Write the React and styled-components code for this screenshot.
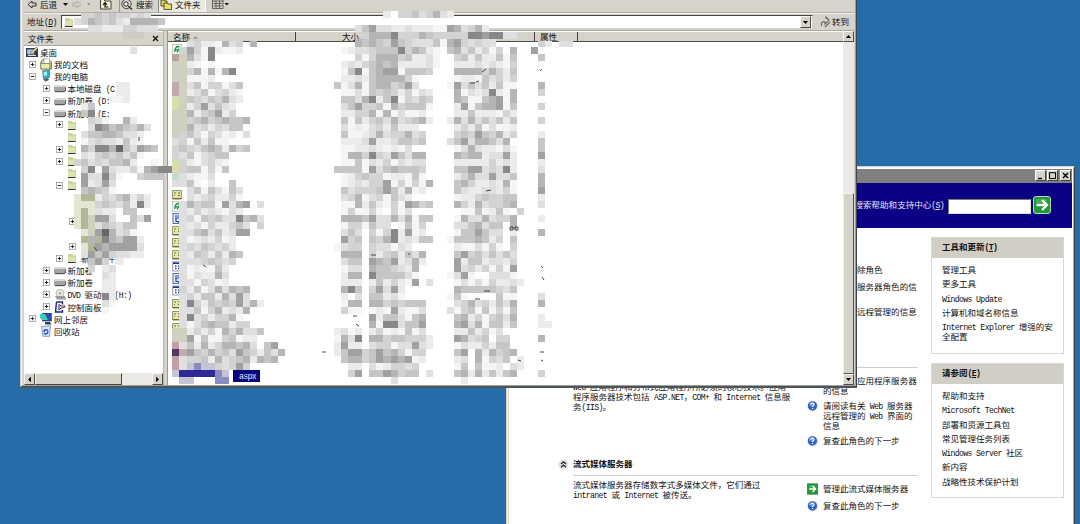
import React from 'react';
import styled, { createGlobalStyle } from 'styled-components';

const Global = createGlobalStyle`
  html, body { margin: 0; padding: 0; }
  body { overflow: hidden; }
  *, *::before, *::after { box-sizing: border-box; }
`;

const Desktop = styled.div`
  position: relative;
  width: 1080px;
  height: 524px;
  overflow: hidden;
  background: #266ca9;
  color: #111;
  font: 8.52px/10.2px 'Noto Sans CJK SC', 'Liberation Sans', sans-serif;
  white-space: nowrap;
`;

const Latin = styled.span`
  font-family: 'Liberation Mono', monospace;
  font-size: 8.2px;
  letter-spacing: -0.65px;
  line-height: 1px;
  white-space: pre;
`;

/* Half-width characters take exactly half of a full-width one. */
const T = ({ children }) =>
  children.split(/([\x20-\x7e]+)/).map((s, i) => (i % 2 ? <Latin key={i}>{s}</Latin> : s));

const face = '#d6d3cb';

/* ---------- server window ---------- */

const ServerWindow = styled.section`
  position: absolute;
  left: 506px;
  top: 166px;
  width: 569px;
  height: 380px;
  display: flex;
  flex-direction: column;
  background: #fff;
  border: 1px solid #d4d0c8;
  border-right-color: #404040;
  box-shadow: inset 1px 1px #f6f6f6, inset -1px 0 #a8a8a8, inset 2px 0 #d4d0c8;
  padding: 2px 2px 0 3px;
`;
const TitleBar = styled.div`
  display: flex;
  flex: none;
  justify-content: flex-end;
  gap: 1px;
  height: 14px;
  padding: 1px 1px 1px 0;
  background: #808080;
`;
const CaptionButton = styled.span`
  display: grid;
  place-items: center;
  width: 11px;
  height: 11px;
  margin-left: ${(p) => (p.$apart ? 1 : 0)}px;
  background: ${face};
  border: 1px solid #fff;
  border-right-color: #444;
  border-bottom-color: #444;
`;
const Banner = styled.div`
  display: flex;
  flex: none;
  align-items: center;
  justify-content: flex-end;
  height: 45px;
  padding: 0 21px 2px 0;
  background: #0a0284;
  color: #e6e6f4;
`;
const SearchLabel = styled.span`
  padding-bottom: 1px;
`;
const SearchInput = styled.div`
  width: 83px;
  height: 15px;
  margin: 3px 2px 0 4px;
  background: #fff;
  border: 1px solid #777;
  border-right-color: #ddd;
  border-bottom-color: #ddd;
`;
const Content = styled.div`
  display: flex;
  flex: 1;
  align-items: flex-start;
  padding-right: 8px;
`;
const Roles = styled.div`
  flex: 1;
  padding: 0 13px 0 48px;
`;
const RoleHead = styled.div`
  display: flex;
  align-items: flex-start;
  height: ${(p) => p.$h}px;
  gap: 4px;
  font-weight: 700;
  padding-top: ${(p) => p.$top || 0}px;
`;
const RoleBody = styled.div`
  display: flex;
  justify-content: space-between;
  height: ${(p) => p.$h}px;
  margin-left: 15px;
  border-top: ${(p) => (p.$plain ? 0 : 1)}px solid #cfcfcf;
`;
const Paragraph = styled.div`
  padding-top: ${(p) => p.$top}px;
`;
const Links = styled.div`
  display: flex;
  flex-direction: column;
  gap: ${(p) => p.$gap}px;
  width: 111px;
  padding-top: ${(p) => p.$top}px;
`;
const LinkRow = styled.div`
  display: flex;
  gap: 5px;
`;
const Sidebar = styled.div`
  display: flex;
  flex-direction: column;
  gap: 9px;
  width: 133px;
  padding-top: 9px;
`;
const Card = styled.div`
  height: ${(p) => p.$h}px;
  border: 1px solid #d9d7d0;
  background: #fff;
`;
const CardTitle = styled.div`
  height: 20px;
  padding: 3px 0 0 10px;
  background: #d1cec5;
  font-weight: 700;
`;
const CardList = styled.div`
  display: flex;
  flex-direction: column;
  gap: 4.1px;
  padding: 6px 0 0 10px;
`;
const Help = () => (
  <svg width="11" height="12" viewBox="0 0 11 12">
    <circle cx="5.7" cy="6.2" r="5" fill="#b9c4d4" />
    <circle cx="5.4" cy="5.8" r="4.6" fill="#2e62c4" />
    <circle cx="4.3" cy="4.3" r="2.4" fill="#7fa6ea" opacity=".6" />
    <path d="M3.8 4.7C4 2.6 7.2 2.7 7 4.7C6.9 5.8 5.5 5.9 5.5 7M5.5 8V9" fill="none" stroke="#fff" strokeWidth="1.2" />
  </svg>
);
const Go = ({ size = 11 }) => (
  <svg width={size} height={size > 12 ? size : 12} viewBox="0 0 18 18">
    <rect x=".5" y=".5" width="17" height="17" rx={size > 12 ? 2.5 : 0} fill="#22983a" stroke={size > 12 ? '#b7ddb5' : '#1b7f2e'} />
    <path d="M3 3H14V7H3Z" fill="#5fbd64" opacity=".6" />
    <path d="M3.5 9H14M9 4L14 9L9 14" fill="none" stroke="#fff" strokeWidth="2.3" />
  </svg>
);
const Chevron = () => (
  <svg width="11" height="12" viewBox="0 0 11 12">
    <circle cx="5.5" cy="6.5" r="5" fill="#dedee4" />
    <path d="M3 6L5.5 3.7L8 6M3 9.3L5.5 7L8 9.3" fill="none" stroke="#222" strokeWidth="1.2" />
  </svg>
);

const updates = ['管理工具', '更多工具', 'Windows Update', '计算机和域名称信息', 'Internet Explorer 增强的安\n全配置'];
const seeAlso = ['帮助和支持', 'Microsoft TechNet', '部署和资源工具包', '常见管理任务列表', 'Windows Server 社区', '新内容', '战略性技术保护计划'];

const Lines = ({ text }) => (
  <div>
    {text.split('\n').map((l, i) => (
      <div key={i}><T>{l}</T></div>
    ))}
  </div>
);
const Item = ({ go, text }) => (
  <LinkRow>
    {go ? <Go /> : <Help />}
    <Lines text={text} />
  </LinkRow>
);
const LinkItem = styled.div`
  display: flex;
`;
const SideCard = ({ h, title, hotkey, items }) => (
  <Card $h={h}>
    <CardTitle>{title}<Latin>(<u>{hotkey}</u>)</Latin></CardTitle>
    <CardList>
      {items.map((t) => <LinkItem key={t}><Lines text={t} /></LinkItem>)}
    </CardList>
  </Card>
);

const Server = () => (
  <ServerWindow>
    <TitleBar>
      <CaptionButton><svg width="9" height="9"><path d="M2 7.5H6" stroke="#000" strokeWidth="1.4" /></svg></CaptionButton>
      <CaptionButton><svg width="9" height="9"><path d="M1.5 2V7.5H7.5V2M1 1.7H8" fill="none" stroke="#000" /></svg></CaptionButton>
      <CaptionButton $apart><svg width="9" height="9"><path d="M2 2L7 7M7 2L2 7" stroke="#000" strokeWidth="1.3" /></svg></CaptionButton>
    </TitleBar>
    <Banner>
      <SearchLabel>搜索帮助和支持中心<Latin>(<u>S</u>)</Latin></SearchLabel>
      <SearchInput />
      <Go size={18} />
    </Banner>
    <Content>
      <Roles>
        <RoleBody $h={125} $plain>
          <span />
          <Links $top={35.5} $gap={5}>
            <Item go text="添加或删除角色" />
            <Item text={'阅读有关服务器角色的信\n息'} />
            <Item text="阅读有关远程管理的信息" />
          </Links>
        </RoleBody>
        <RoleHead $h={14} />
        <RoleBody $h={86}>
          <Paragraph $top={13}>
            <Lines text={'Web 应用程序和分布式应用程序所必须的核心技术。应用\n程序服务器技术包括 ASP.NET，COM+ 和 Internet 信息服\n务(IIS)。'} />
          </Paragraph>
          <Links $top={7} $gap={4.3}>
            <Item text={'阅读有关应用程序服务器\n的信息'} />
            <Item text={'请阅读有关 Web 服务器\n远程管理的 Web 界面的\n信息'} />
            <Item text="复查此角色的下一步" />
          </Links>
        </RoleBody>
        <RoleHead $h={22} $top={5}><Chevron />流式媒体服务器</RoleHead>
        <RoleBody $h={70}>
          <Paragraph $top={2.5}>
            <Lines text={'流式媒体服务器存储数字式多媒体文件，它们通过\nintranet 或 Internet 被传送。'} />
          </Paragraph>
          <Links $top={7} $gap={5}>
            <Item go text="管理此流式媒体服务器" />
            <Item text="复查此角色的下一步" />
          </Links>
        </RoleBody>
      </Roles>
      <Sidebar>
        <SideCard h={117} title="工具和更新" hotkey="T" items={updates} />
        <SideCard h={135} title="请参阅" hotkey="E" items={seeAlso} />
      </Sidebar>
    </Content>
  </ServerWindow>
);

/* ---------- explorer window ---------- */

const Explorer = styled.section`
  position: absolute;
  left: 20px;
  top: 0;
  width: 837px;
  height: 388px;
  display: flex;
  flex-direction: column;
  background: ${face};
  border: 1px solid #c9ccce;
  border-top: 0;
  border-right-color: #3c4650;
  border-bottom: 2px solid #4c5558;
  box-shadow: inset 1px 0 #f4f4f2, inset -1px -1px #a09e98;
  padding: 0 2px 1px 3px;
`;
const Toolbar = styled.div`
  display: flex;
  flex: none;
  align-items: flex-start;
  height: 13px;
  border-bottom: 1px solid #b4b1a9;
  box-shadow: 0 1px #f2f1ee;
`;
const ToolItem = styled.div`
  display: flex;
  align-items: flex-start;
  gap: 3px;
  height: 12px;
  width: ${(p) => p.$w}px;
  padding-left: ${(p) => p.$pad || 0}px;
  line-height: 9px;
  ${(p) => p.$pressed && 'background:#ebe9e4;border-left:1px solid #888;border-right:1px solid #fff;'}
  ${(p) => p.$rule && 'border-left:1px solid #9a978f;'}
`;
const AddressBar = styled.div`
  display: flex;
  flex: none;
  align-items: center;
  height: 17px;
  padding-left: 3px;
`;
const AddressLabel = styled.span`
  width: 30px;
  padding-bottom: 1px;
`;
const AddressField = styled.div`
  display: flex;
  align-items: center;
  justify-content: space-between;
  width: 752px;
  height: 14px;
  margin: 1px 7px 0 4px;
  padding: 0 1px 0 2px;
  background: #fff;
  border: 1px solid #d4d0c8;
  border-top: 1.5px solid #444;
  border-left: 1.5px solid #444;
`;
const Arrow = styled.span`
  display: grid;
  flex: none;
  place-items: center;
  width: ${(p) => p.$w || 11}px;
  height: ${(p) => p.$h || 11}px;
  background: ${face};
  border: 1px solid #f8f8f6;
  border-right-color: #4c4c4c;
  border-bottom-color: #4c4c4c;
`;
const Panes = styled.div`
  display: flex;
  flex: 1;
  min-height: 0;
  border-top: 1px solid #aaa79f;
`;
const TreePane = styled.div`
  display: flex;
  flex-direction: column;
  width: 140px;
  background: #fff;
  border-right: 1px solid #b8b5ae;
`;
const PaneTitle = styled.div`
  display: flex;
  flex: none;
  align-items: center;
  justify-content: space-between;
  height: 15px;
  padding: 0 4px;
  background: ${face};
  border-top: 1px solid #fff;
  border-bottom: 1px solid #aaa79f;
`;
const Tree = styled.div`
  flex: 1;
  overflow: hidden;
`;
const TreeRow = styled.div`
  display: flex;
  align-items: center;
  height: 12.13px;
  padding-left: ${(p) => p.$indent}px;
  gap: 2px;
`;
const Expander = styled.span`
  display: flex;
  width: 7px;
  margin-right: 2px;
`;
const HScroll = styled.div`
  display: flex;
  flex: none;
  height: 12px;
  background: #ebe9e5;
  justify-content: space-between;
`;
const HThumb = styled.div`
  width: 87px;
  margin-right: auto;
  background: ${face};
  border: 1px solid #f6f6f4;
  border-right-color: #444;
  border-bottom-color: #444;
`;
const Splitter = styled.div`
  width: 4px;
  background: ${face};
  border-right: 1px solid #9b988f;
`;
const ListPane = styled.div`
  display: flex;
  flex: 1;
  flex-direction: column;
  min-width: 0;
  background: #fff;
`;
const Columns = styled.div`
  display: flex;
  flex: none;
  height: 11px;
  background: ${face};
  border-top: 1px solid #fff;
  border-bottom: 1.5px solid #4e4c48;
  line-height: 9px;
`;
const Column = styled.div`
  flex: none;
  width: ${(p) => p.$w}px;
  padding-left: ${(p) => p.$pad || 5}px;
  border-right: 1px solid #44423e;
`;
const Files = styled.div`
  padding-top: 1px;
`;
const FileRow = styled.div`
  display: flex;
  align-items: center;
  height: 12.1px;
  padding-left: 4px;
`;
const Selected = styled.span`
  width: 27px;
  height: 12px;
  margin-left: 61px;
  padding: 1px 0 0 6px;
  background: #08057c;
  color: #e8e8ff;
  line-height: 9px;
`;
const VScroll = styled.div`
  display: flex;
  flex-direction: column;
  justify-content: space-between;
  width: 11px;
  background: #ebe9e6;
`;
const VThumb = styled.div`
  height: 181px;
  margin-top: auto;
  background: ${face};
  border: 1px solid #f4f3f0;
  border-right-color: #55534e;
  border-bottom-color: #55534e;
`;

const Tri = ({ d }) => (
  <svg width="7" height="7" viewBox="0 0 7 7">
    <path d={{ up: 'M1 5H6L3.5 2Z', down: 'M1 2H6L3.5 5Z', left: 'M5 .8V6.2L2 3.5Z', right: 'M2 .8V6.2L5 3.5Z' }[d]} fill="#000" />
  </svg>
);
const PlusMinus = ({ kind }) => (
  <svg width="7" height="7" viewBox="0 0 7 7">
    <rect x=".5" y=".5" width="6" height="6" fill="#fff" stroke="#999" strokeWidth=".8" />
    <path d={kind === '+' ? 'M1.8 3.5H5.2M3.5 1.8V5.2' : 'M1.8 3.5H5.2'} stroke="#111" strokeWidth=".9" />
  </svg>
);

const glyphs = {
  desktop: <><rect x="0" y="2" width="12" height="9" fill="#303a4e" /><rect x="1.2" y="3.4" width="7" height="5" fill="#a9c6ee" /><path d="M4 7L10.5 1L12 2.5L6 8Z" fill="#eadf9a" stroke="#333" strokeWidth=".5" /><path d="M2 9.5H10" stroke="#ddd" /></>,
  docs: <><path d="M1 4L3 1.5H9L11.3 4V11H1Z" fill="#e0dc8e" stroke="#55583a" strokeWidth=".9" /><rect x="4" y=".8" width="5.5" height="5" fill="#fff" stroke="#777" strokeWidth=".5" /><path d="M.6 5.5H10L9.5 11H1.2Z" fill="#eceaa8" stroke="#66683a" strokeWidth=".6" /></>,
  pc: <><path d="M2.5 1L9.5 0V7.5L3.5 8.5Z" fill="#25b8cf" stroke="#566" strokeWidth=".7" /><path d="M3.5 2L7 1.5V5.5L4 6Z" fill="#9cf0f4" /><path d="M3 9L8 8L9 10L5.5 11.7Z" fill="#52606e" /></>,
  disk: <><path d="M0 5L2 3H10.5L12 5V8.5L10.5 10H1.5L0 8.5Z" fill="#a5a5a5" /><path d="M0 5L2 3H10.5L11.5 5Z" fill="#dadada" /><path d="M.8 9.7H10.5L11.8 8V5.5" fill="none" stroke="#3c3c3c" strokeWidth=".9" /></>,
  folder: <><path d="M1 2H5L6 3.3H9V10.5H1Z" fill="#cfd39a" /><path d="M1 5H8V10H1Z" fill="#dfe2b4" /><path d="M1 10.5H8.5" stroke="#33352a" strokeWidth="1" /></>,
  dvd: <><circle cx="6" cy="4.3" r="4" fill="#e5e5e8" stroke="#999" strokeWidth=".6" /><circle cx="6" cy="4.3" r="1.2" fill="#b5b560" /><path d="M1 7H11L12 10.5H3Z" fill="#9a9a9a" /></>,
  control: <><path d="M2.5 1H8.5V3.5M8.5 9V11H1.5L2.5 1" fill="#dfe6f7" stroke="#252a70" strokeWidth="1.4" /><path d="M5 3.5V9L7 7L10.5 6.5L11 5L7 5Z" fill="#f3f3ff" stroke="#252a70" strokeWidth="1" /><circle cx="8" cy="6" r="1.2" fill="#d83" /></>,
  network: <><rect x="2.5" y="0" width="9" height="8" fill="#2a4bbd" stroke="#26324a" strokeWidth=".6" /><path d="M0 1H5L8 7H2L0 5Z" fill="#3fd0b2" /><path d="M5 9H10L11.5 11.5H5Z" fill="#345" /></>,
  bin: <><path d="M1.5 1.5L10.5 .8L9.5 11.3H3Z" fill="#dce7fa" stroke="#6f86bb" strokeWidth=".8" /><path d="M4 7C4 4 7.5 4 8 6.5M8 7C7 9.5 5 9.5 4 8" fill="none" stroke="#2458c8" strokeWidth="1.5" /></>,
};
const Icon = ({ name }) => <svg width="12" height="12" viewBox="0 0 12 12">{glyphs[name]}</svg>;

/* [indent, expander, icon, label] */
const tree = [
  [0, null, 'desktop', '桌面'],
  [5, '+', 'docs', '我的文档'],
  [5, '-', 'pc', '我的电脑'],
  [18.5, '+', 'disk', '本地磁盘 (C'],
  [18.5, '+', 'disk', '新加卷 (D:'],
  [18.5, '-', 'disk', '新加卷 (E:'],
  [32, '+', 'folder', ''],
  [32, ' ', 'folder', ''],
  [32, '+', 'folder', ''],
  [32, '+', 'folder', ''],
  [32, ' ', 'folder', ''],
  [32, '-', 'folder', ''],
  [0, ' ', null, ''],
  [0, ' ', null, ''],
  [45, '+', null, ''],
  [0, ' ', null, ''],
  [45, '+', null, ''],
  [32, '+', 'folder', '新建文件夹'],
  [18.5, '+', 'disk', '新加卷'],
  [18.5, '+', 'disk', '新加卷'],
  [18.5, '+', 'dvd', 'DVD 驱动器 (H:)'],
  [18.5, '+', 'control', '控制面板'],
  [5, '+', 'network', '网上邻居'],
  [5, ' ', 'bin', '回收站'],
];

const FileIcon = ({ kind }) => (
  <svg width="11" height="11" viewBox="0 0 11 11">
    {kind === 'y' && <><path d="M.5 1.5H9.5V10H.5Z" fill="#e4e5a6" stroke="#8b8d5b" strokeWidth=".9" /><path d="M2.2 4H4M6 4H8M2.2 6.5H3M6 6.5H8M1 9.6H9" stroke="#65663a" strokeWidth="1" /></>}
    {kind === 'g' && <><rect x=".5" y=".5" width="9" height="10" fill="#f4fbf4" stroke="#a5b5a5" strokeWidth=".7" /><path d="M7.5 3C5 1.5 2.5 4 2.8 8M3 5.8H7M5 8.5L7.5 4" fill="none" stroke="#178c3c" strokeWidth="1.3" /></>}
    {kind === 'b' && <><rect x="1" y=".5" width="8.5" height="10" fill="#e3ebf8" stroke="#4e5b82" strokeWidth=".9" /><path d="M3 3H8M3 5H8V8.5H4V5M6 9L9 10" fill="none" stroke="#244b9c" strokeWidth="1.2" /></>}
    {kind === 'w' && <><rect x=".8" y="1" width="8.5" height="9" fill="#fff" stroke="#777b91" strokeWidth=".8" /><path d="M1 2.2H9.2" stroke="#22308e" strokeWidth="1.6" /><path d="M3 5H4.5M6 5H7.5M3 7.5H4.5M6 7.5H7.5" stroke="#2b3aa0" strokeWidth="1.5" /></>}
  </svg>
);
const files = 'g...........ygbyyywbwyyy...'.split('');

/* ---------- pixelated areas ---------- */

const tone = {
  0: '#ffffff', 1: '#f5f5f5', 2: '#ebebeb', 3: '#dfdfdf', 4: '#d3d3d3', 5: '#c6c6c6', 6: '#b5b5b5', 7: '#a1a1a1', 8: '#888888', 9: '#686868',
  a: '#cfd0c0', b: '#c2a9ae', c: '#d9dcab', d: '#c6dccd', e: '#b4b795', f: '#b3a59b', g: '#c69ca6', h: '#593361', k: '#e3e6d3',
  m: '#c4c4d6', n: '#8d8cc0', o: '#2d2a96', p: '#cfccc5',
};
const patches = [
  {
    col: 10, row: 1, top: 13, cells: [
      '.4454544343', '3465453266665', '..3322244333', '.......ppp', '', '........3', '', '', '', '', '......22', '......22', '.....112',
      '.25', '.58....', '..431..62', '..387565463', '.355665332', '.134332521', '.64886953765', '.324545351', '453435562..1',
      '.4817322416788', '.7338410.4555', '.72373', '.56541', 'kee24356242', 'kkk45435282', 'kek322.55', 'kea773..537', 'kea354355',
      '.ka796341', '.e6e865772', '.ke7677773', '.375743322', '..574.2', '..4.23', '....32', '....22', '....22', '....82', '....31', '....1',
    ],
  },
  {
    col: 24, row: 5, top: 41.3, cells: [
      '..34221634.6', '.474182112', 'fa6318', 'aa21.1', 'aa4616168', 'aa1112', 'ba35144135', 'ba23513421', 'ca54354632', 'ca2473532',
      'aa6245724', 'aa456456556', 'aa63424355', 'a45314312.3', '34152511', '45435652645', '43513455', 'c4213421', 'c4551415', 'd32113',
      '3351.2..5', '..35153153', '..32342241', '.3645517367.3', '.324232132', '.341545338563', '.3231422453.4', '.3356352377', '.31232412',
      '.34354342', '.325425265', '.33345434', '.3121152', '.3132263', '.3314312', '.4251363656', '.3425526373', '.384254547362',
      '.3351462326', '.383424461', '.3135655244', 'aa24241646335', 'aa7151145122', 'g35262466563.57', 'hb75464537542536', 'g34452634562656', 'g3mnmm43474',
      'mooooonm', '.mm...nn',
    ],
  },
  { col: 75, row: 5, top: 40.5, cells: ['.42.33'] },
  {
    col: 47, row: 1, cells: [
      '.......2044534632', '', '...3573322322211763462', '....46668444654444488788334', '...65654754333516743433',
      '.12334555846521056352414.6..7', '...414666452231..452522515...5', '.23245656222231..222323214',
      '.1581567715554...666646425', '.22325666641.....122153424', '513615664573....1735352511...6',
      '.1131545424132...613238216...4', '.5536825814354...651156716', '.3574451645551...271566715...4',
      '.224461613112....225222142', '.5152453634562..2636353525...4', '.31213425222.....242513112',
      '.511236344634....454754624...2', '.222372235545...357366536....5', '.1122321213......136322131...5',
      '.166484375366....656623372...7', '.115132413233....222224232...2', '5555173565554....557734382...3',
      '.124544122151....246337335...6', '.1232447141416...564223261...6', '.534445752612....532233241...7',
      '.3461341532......122454455...2', '.1162521417645...642634456...3', '.141141.413......0115125104',
      '.6665733636155...163363446...2', '.144153301514....335635506', '.353.41482712....155753302...6',
      '.745.546823255..1555652405', '1344.433132......2113141.4', '.666.424525360...574535353',
      '.355.76572362....725523324', '.133.6554326.....734241417', '.266.8555531....1371003331',
      '.222.2524217.3...1313142232', '.685.47372.......655555435', '.2.3.55231......151....511...3', '.166.66454555....346342536...6',
      '.411.12172113...3145151415', '.....72553156....562414536...2', '.....61883557....673615525...22', '2312.24121513....2252413',
      '1638.664554442...76345044....6', '2722.344133732...13224255', '2577457564144....57.626456',
      '.566457676712....23.61435.2', '..22.3124434.....15.5112.32', '..47.5576455.3...562625256...4', '........3.........2',
    ],
  },
];
const PITCH = 7.035;

const Overlay = styled.svg`
  position: absolute;
  left: 0;
  top: 0;
`;
const Mosaic = () => (
  <Overlay width="860" height="390">
    <g shapeRendering="crispEdges">
      {patches.map(({ col, row, top = 0, cells }) =>
        cells.map((line, r) =>
          [...line].map((c, i) => {
            if (!tone[c]) return null;
            const bottom = 4.3 + (row + r + 1) * PITCH;
            const y = Math.max(top, bottom - PITCH);
            return <rect key={`${col}-${r}-${i}`} x={3.6 + (col + i) * PITCH} y={y} width={PITCH} height={bottom - y} fill={tone[c]} />;
          })
        )
      )}
    </g>
    <path d="M482 72L486 69M470 83H475M476 82L479 81M486 191L491 190M510 227V230H513V227ZM515 227V230H518V227ZM371 255H376M408 254H410M475 299H480M484 291H490M353 316H357M356 324L359 326M322 352H326M541 266L543 268M542 277L544 280M540 352H544M541 360L543 361M518 360L521 361M203 265L206 267M139 137V141M94 247L97 251M542 69L540 71" fill="none" stroke="#333" strokeWidth=".9" />
  </Overlay>
);

const ExplorerWindow = () => (
  <Explorer>
    <Toolbar>
      <ToolItem $w={76} $pad={3}>
        <svg width="10" height="9"><path d="M9 3H5V1L1 4.5L5 8V6H9Z" fill="none" stroke="#333" /></svg>
        后退
        <svg width="30" height="9"><path d="M3 3H8L5.5 6Z" fill="#111" /><path d="M13 3H17V1L21 4.5L17 8V6H13Z" fill="none" stroke="#aaa" /><path d="M27 3H31L29 5.5Z" fill="#999" /></svg>
      </ToolItem>
      <ToolItem $w={19}><svg width="12" height="10"><path d="M.5 0V9H11V1H5L4 0" fill="#f3f0c9" stroke="#444" /><path d="M8.5 7H5V3M3 5L5 2.5L7 5" fill="none" stroke="#111" strokeWidth="1.2" /></svg></ToolItem>
      <ToolItem $w={39} $rule $pad={1}>
        <svg width="12" height="10"><circle cx="5.5" cy="4" r="4.7" fill="none" stroke="#444" /><circle cx="5" cy="4" r="2.2" fill="#eee" stroke="#333" /><path d="M7 6L11 9.5" stroke="#333" strokeWidth="1.5" /></svg>
        搜索
      </ToolItem>
      <ToolItem $w={48} $pressed $pad={1}>
        <svg width="12" height="10"><path d="M1 0H4L5 1H7V6H1Z" fill="#dad345" stroke="#333" strokeWidth=".8" /><path d="M4 3H7L8 4H11.5V9.5H4Z" fill="#e9e25c" stroke="#333" strokeWidth=".8" /></svg>
        文件夹
      </ToolItem>
      <ToolItem $w={30} $pad={6}>
        <svg width="18" height="10"><path d="M.5 0V8.5H11V0M.5 1H11M4 1V8M7.5 1V8M1.5 3.5H10M1.5 6H10" fill="none" stroke="#555" strokeWidth=".9" /><path d="M12.5 3H17L14.7 5.5Z" fill="#111" /></svg>
      </ToolItem>
    </Toolbar>
    <AddressBar>
      <AddressLabel>地址<Latin>(<u>D</u>)</Latin></AddressLabel>
      <AddressField>
        <Icon name="folder" />
        <Arrow $w={11} $h={12}><Tri d="down" /></Arrow>
      </AddressField>
      <svg width="12" height="12" viewBox="0 0 12 12"><path d="M2 10C0 7 3 5 5 6V8L9 4L6 1V3M5 11L10 6" fill="none" stroke="#666" strokeWidth="1.1" /></svg>
      转到
    </AddressBar>
    <Panes>
      <TreePane>
        <PaneTitle>
          文件夹
          <svg width="7" height="7"><path d="M1 1L6 6M6 1L1 6" stroke="#111" strokeWidth="1.3" /></svg>
        </PaneTitle>
        <Tree>
          {tree.map(([indent, exp, icon, label], i) => (
            <TreeRow key={i} $indent={indent + (exp === null ? 2 : 0)}>
              {exp !== null && <Expander>{exp !== ' ' && <PlusMinus kind={exp} />}</Expander>}
              {icon && <Icon name={icon} />}
              <span><T>{label}</T></span>
            </TreeRow>
          ))}
        </Tree>
        <HScroll>
          <Arrow $h={12}><Tri d="left" /></Arrow>
          <HThumb />
          <Arrow $h={12}><Tri d="right" /></Arrow>
        </HScroll>
      </TreePane>
      <Splitter />
      <ListPane>
        <Columns>
          <Column $w={128}>名称 <svg width="7" height="5"><path d="M1 4L3.5 1L6 4Z" fill="#999" /></svg></Column>
          <Column $w={239} $pad={46}>大小</Column>
          <Column $w={43} $pad={5}>属性</Column>
        </Columns>
        <Files>
          {files.map((k, i) => <FileRow key={i}><FileIcon kind={k} /></FileRow>)}
          <FileRow><Selected><Latin>aspx</Latin></Selected></FileRow>
        </Files>
      </ListPane>
      <VScroll>
        <Arrow><Tri d="up" /></Arrow>
        <VThumb />
        <Arrow><Tri d="down" /></Arrow>
      </VScroll>
    </Panes>
  </Explorer>
);

export default function App() {
  return (
    <Desktop>
      <Global />
      <Server />
      <ExplorerWindow />
      <Mosaic />
    </Desktop>
  );
}
